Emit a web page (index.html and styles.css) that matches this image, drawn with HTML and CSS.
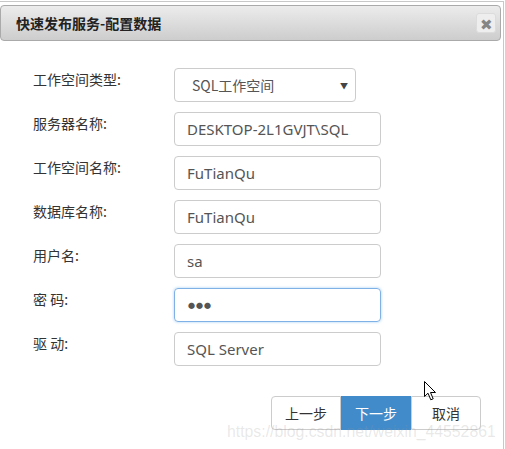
FILE: index.html
```html
<!DOCTYPE html>
<html>
<head>
<meta charset="utf-8">
<link rel="stylesheet" href="styles.css">
</head>
<body>
<div class="dialog">
  <div class="titlebar">
    <span class="title">快速发布服务-配置数据</span>
    <span class="close">✖</span>
  </div>
  <div class="form">
    <div class="row">
      <label class="lbl">工作空间类型:</label>
      <div class="select"><span>SQL工作空间</span><span class="arrow">▼</span></div>
    </div>
    <div class="row">
      <label class="lbl">服务器名称:</label>
      <div class="input">DESKTOP-2L1GVJT\SQL</div>
    </div>
    <div class="row">
      <label class="lbl">工作空间名称:</label>
      <div class="input">FuTianQu</div>
    </div>
    <div class="row">
      <label class="lbl">数据库名称:</label>
      <div class="input">FuTianQu</div>
    </div>
    <div class="row">
      <label class="lbl">用户名:</label>
      <div class="input">sa</div>
    </div>
    <div class="row">
      <label class="lbl">密 码:</label>
      <div class="input focus"><span class="dots">●●●</span></div>
    </div>
    <div class="row">
      <label class="lbl">驱 动:</label>
      <div class="input">SQL Server</div>
    </div>
  </div>
  <div class="buttons">
    <button class="btn">上一步</button>
    <button class="btn primary">下一步</button>
    <button class="btn">取消</button>
  </div>
  <div class="watermark">https://blog.csdn.net/weixin_44552861</div>
  <svg class="cursor" width="14" height="20" viewBox="0 0 14 20">
    <path d="M0.5 0.5 L0.5 15.5 L4 12.2 L6.8 18.8 L9.2 17.8 L6.5 11.5 L11.5 11.5 Z" fill="#fff" stroke="#000" stroke-width="1"/>
  </svg>
</div>
</body>
</html>
```
FILE: styles.css
```css
html, body {
  margin: 0;
  padding: 0;
  background: #fff;
}
body {
  font-family: "Noto Sans CJK SC", "Noto Sans", sans-serif;
  font-size: 14px;
  color: #333;
}
.dialog {
  position: relative;
  height: 448px;
  margin-top: 1px;
  padding: 3px 2px 0 0;
  border-top: 1px solid #c8c8c8;
  border-right: 1px solid #c8c8c8;
  box-sizing: border-box;
  width: 504px;
  overflow: hidden;
}
.titlebar {
  height: 36px;
  width: 501px;
  box-sizing: border-box;
  border: 1px solid #aaa;
  border-radius: 4px;
  background: linear-gradient(to bottom, #ececec 0%, #cdcdcd 100%);
  display: flex;
  align-items: center;
  justify-content: space-between;
  padding: 0 4px 0 15px;
}
.title {
  font-weight: bold;
  font-size: 14px;
  color: #222;
}
.close {
  width: 20px;
  height: 20px;
  box-sizing: border-box;
  border: 1px solid #dcdcdc;
  border-radius: 3px;
  background: #eeeeee;
  color: #858585;
  font-size: 15px;
  display: flex;
  align-items: center;
  justify-content: center;
  line-height: 1;
}
.form {
  padding: 27px 0 0 33px;
  display: flex;
  flex-direction: column;
  gap: 10px;
}
.row {
  display: grid;
  grid-template-columns: 141px auto;
  align-items: start;
}
.lbl {
  padding-top: 1px;
  line-height: 20px;
  font-size: 14px;
  color: #333;
}
.select, .input {
  height: 34px;
  box-sizing: border-box;
  border: 1px solid #ccc;
  border-radius: 4px;
  color: #555;
  font-size: 15px;
  display: flex;
  align-items: center;
  font-family: "Noto Sans", "Noto Sans CJK SC", sans-serif;
}
.select {
  width: 182px;
  padding: 0 7px 0 17px;
  justify-content: space-between;
  font-family: "Noto Sans CJK SC", sans-serif;
  font-size: 14px;
}
.arrow {
  font-size: 8px;
  color: #444;
}
.input {
  width: 207px;
  padding-left: 12px;
}
.input.focus {
  border-color: #7fb0e6;
  box-shadow: 0 0 3px rgba(102, 175, 233, 0.6);
}
.dots {
  font-size: 7px;
  letter-spacing: 1px;
  color: #555;
  padding-left: 1px;
}
.buttons {
  display: flex;
  justify-content: flex-end;
  margin-top: 30px;
  padding-right: 20px;
}
.btn {
  width: 70px;
  height: 34px;
  border: 1px solid #ccc;
  background: #fff;
  font-family: "Noto Sans CJK SC", sans-serif;
  font-size: 14px;
  color: #333;
  border-radius: 4px;
  padding: 0;
}
.btn:first-child {
  border-top-right-radius: 0;
  border-bottom-right-radius: 0;
}
.btn.primary {
  background: #428bca;
  border-color: #428bca;
  color: #fff;
  border-radius: 0;
}
.btn:last-child {
  border-top-left-radius: 0;
  border-bottom-left-radius: 0;
}
.watermark {
  position: absolute;
  left: 227px;
  top: 421px;
  font-family: "Liberation Sans", sans-serif;
  font-size: 15.8px;
  color: rgba(150, 150, 150, 0.22);
  white-space: nowrap;
}
.cursor {
  position: absolute;
  left: 424px;
  top: 379px;
}
```
